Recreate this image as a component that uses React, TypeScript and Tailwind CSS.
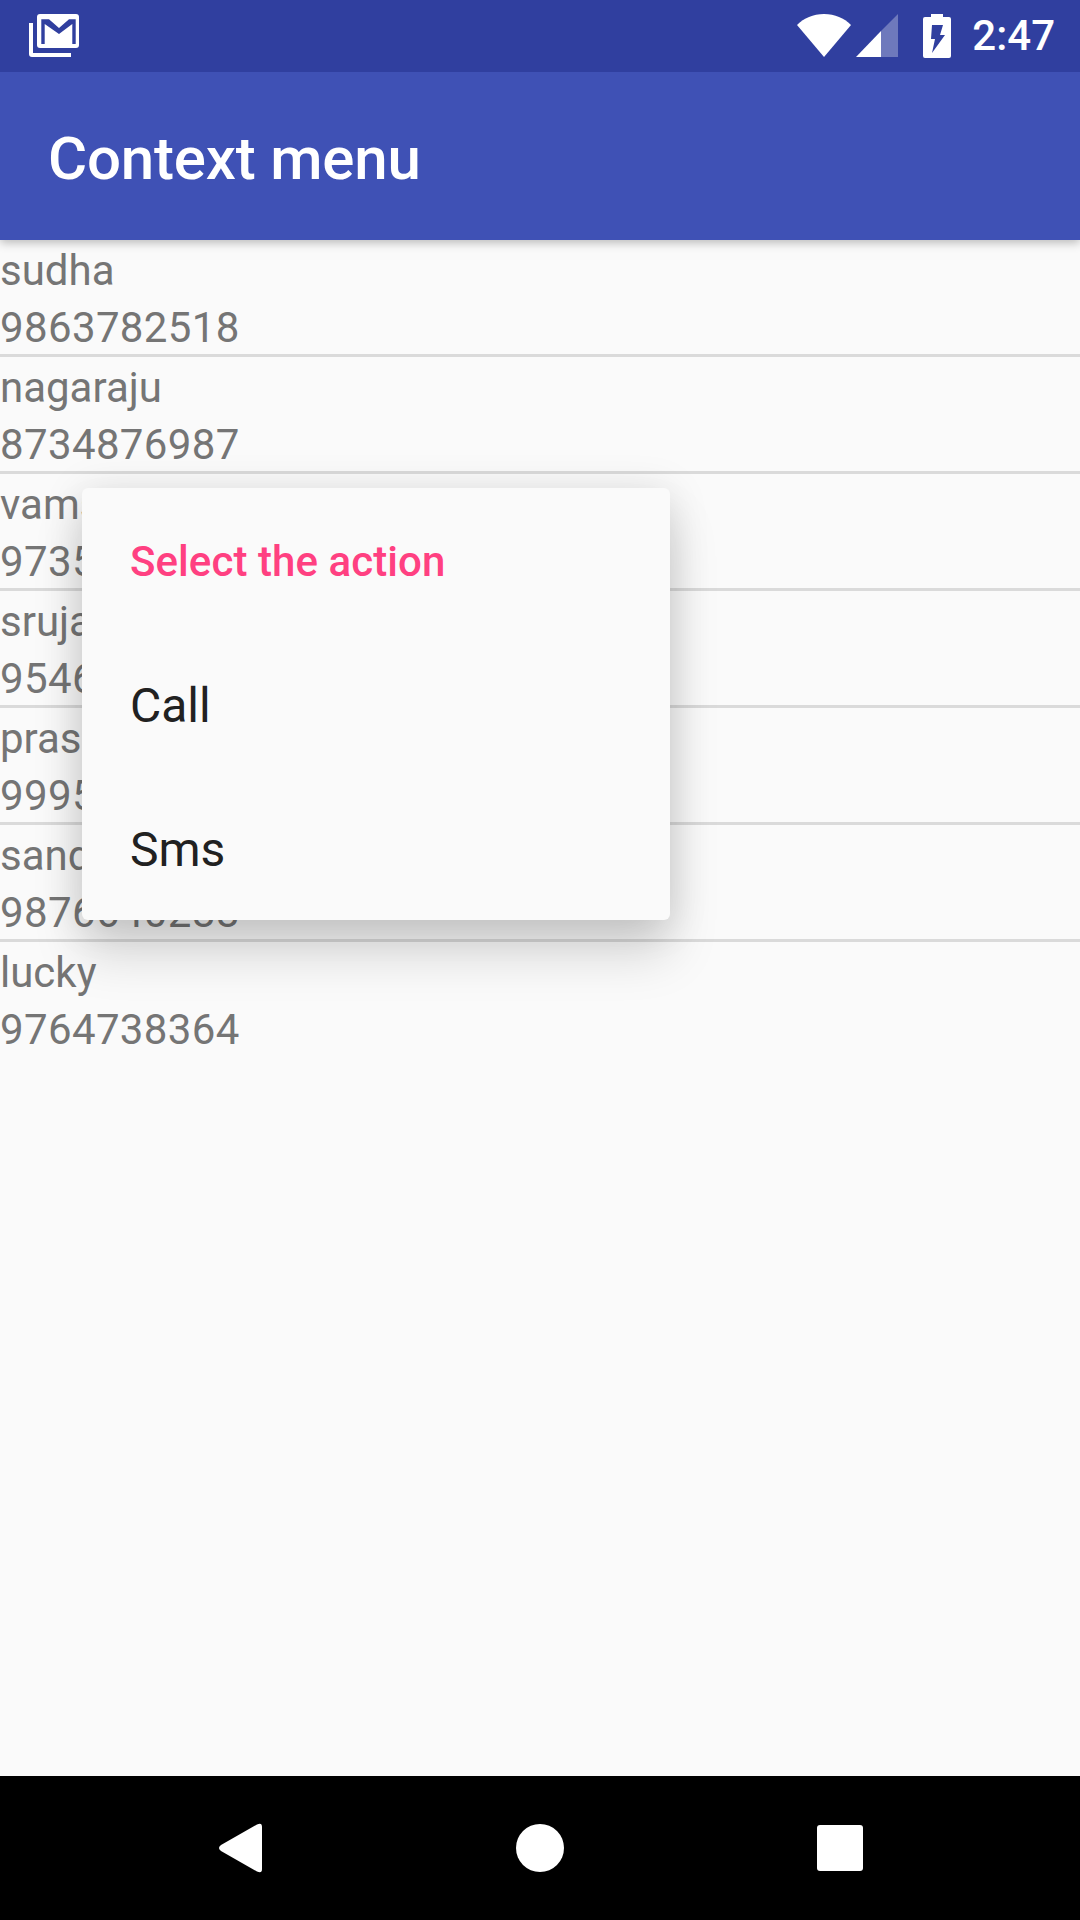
const contacts = [
  { name: "sudha", phone: "9863782518" },
  { name: "nagaraju", phone: "8734876987" },
  { name: "vamsi", phone: "9735462718" },
  { name: "srujana", phone: "9546372819" },
  { name: "prasad", phone: "9995463728" },
  { name: "sandeep", phone: "9876640288" },
  { name: "lucky", phone: "9764738364" },
];

const StatusBar = () => (
  <div className="h-[72px] bg-[#303f9f] flex items-center justify-between pl-[29px] pr-[25px]">
    <svg width="50" height="43" viewBox="0 0 50 43" className="mt-[-1px]">
      <path d="M0 9h4v30h38v4H3a3 3 0 0 1-3-3z" fill="white" />
      <path d="M11 0h36a3 3 0 0 1 3 3v28a3 3 0 0 1-3 3H11a3 3 0 0 1-3-3V3a3 3 0 0 1 3-3z" fill="white" />
      <path d="M12.300 5.300H20L30 14 40 5.300H46.700V30H43.300V10L30 20 15.700 10V30H12.300z" fill="#303f9f" />
    </svg>
    <div className="flex items-center mt-[-1px]">
      <svg width="54" height="44" viewBox="0 0 54 44">
        <path d="M0 11C7 4 16 0 27 0s20 4 27 11L27 43z" fill="white" />
      </svg>
      <svg width="42" height="44" viewBox="0 0 42 44" className="ml-[5px]">
        <path d="M42 0v43H25V17z" fill="white" fillOpacity="0.3" />
        <path d="M0 43l25-26v26z" fill="white" />
      </svg>
      <svg width="28" height="44" viewBox="0 0 28 44" className="ml-[25px]">
        <path d="M8 0h12v3h6a2 2 0 0 1 2 2v37a2 2 0 0 1-2 2H2a2 2 0 0 1-2-2V5a2 2 0 0 1 2-2h6z" fill="white" />
        <path d="M9 11h11l-3 10h5L9 39l3-14H8z" fill="#303f9f" />
      </svg>
      <span className="ml-[21px] text-[42px] leading-none font-medium text-white">2:47</span>
    </div>
  </div>
);

const ContactRow = ({ name, phone, last }: { name: string; phone: string; last: boolean }) => (
  <div className={last ? "h-[117px] pt-[2px] text-[42px] leading-[57px] text-[#757575]" : "h-[117px] pt-[2px] text-[42px] leading-[57px] text-[#757575] border-b-[3px] border-[#dadada]"}>
    <div>{name}</div>
    <div className="tracking-[0.37px]">{phone}</div>
  </div>
);

export default function App() {
  return (
    <div className="relative w-[1080px] h-[1920px] flex flex-col bg-[#fafafa] overflow-hidden font-['Roboto',sans-serif]">
      <header className="relative z-10 shadow-[0_3px_9px_rgba(0,0,0,0.25)]">
        <StatusBar />
        <div className="h-[168px] bg-[#3f51b5] flex items-center pl-[48px] pt-[5px]">
          <h1 className="text-[60px] font-medium tracking-[-0.2px] text-white">Context menu</h1>
        </div>
      </header>

      <main className="flex-1">
        {contacts.map((c, i) => (
          <ContactRow key={c.name} name={c.name} phone={c.phone} last={i === contacts.length - 1} />
        ))}
      </main>

      <nav className="h-[144px] bg-black flex items-center pl-[217px]">
        <svg width="48" height="50" viewBox="0 0 48 50">
          <path
            d="M40 1.500 Q45 -1 45 4 V46 Q45 51 40 48.500 L4 28 Q0 25 4 22z"
            fill="white"
          />
        </svg>
        <div className="ml-[251px] w-[48px] h-[48px] rounded-full bg-white" />
        <div className="ml-[253px] w-[46px] h-[46px] rounded-[3px] bg-white" />
      </nav>

      {/* context menu dialog */}
      <div className="absolute left-[82px] top-[488px] w-[588px] h-[432px] z-20 rounded-[6px] bg-[#fafafa] shadow-[0_34px_50px_rgba(0,0,0,0.15),0_4px_40px_rgba(0,0,0,0.13)]">
        <div className="h-[144px] pl-[48px] pt-[2px] flex items-center text-[42px] font-medium tracking-[0.07px] text-[#ff4081]">Select the action</div>
        <div className="h-[144px] pl-[48px] pt-[4px] flex items-center text-[48px] text-[#212121]">Call</div>
        <div className="h-[144px] pl-[48px] pt-[4px] flex items-center text-[48px] text-[#212121]">Sms</div>
      </div>
    </div>
  );
}
